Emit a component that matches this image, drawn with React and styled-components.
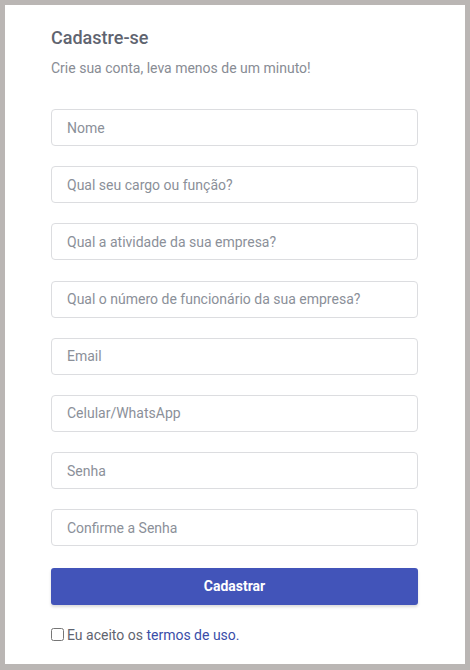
import styled, { createGlobalStyle } from "styled-components";

const GlobalStyle = createGlobalStyle`
  html, body {
    margin: 0;
    padding: 0;
    background: #bab6b4;
    font-family: Roboto, "Liberation Sans", sans-serif;
  }
  * { box-sizing: border-box; }
`;

const Card = styled.div`
  margin: 5px;
  width: 460px;
  height: 659px;
  background: #fff;
  padding: 21px 47px 0 46px;
`;

const Title = styled.h1`
  margin: 0;
  font-size: 18px;
  font-weight: 500;
  line-height: 24px;
  color: #5f6470;
`;

const Subtitle = styled.p`
  margin: 8px 0 0;
  font-size: 14px;
  line-height: 20px;
  color: #888c94;
`;

const Form = styled.form`
  display: flex;
  flex-direction: column;
  gap: 20.2px;
  margin-top: 31px;
`;

const Input = styled.input`
  width: 100%;
  height: 37px;
  border: 1px solid #dcdde0;
  border-radius: 4px;
  padding: 0 15px;
  font-family: inherit;
  font-size: 14px;
  color: #333;
  outline: none;

  &::placeholder {
    color: #8b9099;
  }
`;

const Button = styled.button`
  height: 37px;
  margin-top: 1px;
  border: none;
  border-radius: 3px;
  background: #4254b9;
  color: #fff;
  font-family: inherit;
  font-size: 14px;
  font-weight: 700;
  box-shadow: 0 2px 3px rgba(0, 0, 0, 0.15);
  cursor: pointer;
`;

const Terms = styled.label`
  display: flex;
  align-items: center;
  gap: 3px;
  margin-top: 2px;
  font-size: 14px;
  color: #5f6470;
  white-space: pre;
`;

const Check = styled.input`
  margin: 0;
  width: 13px;
  height: 13px;
`;

const Link = styled.a`
  color: #3a4da8;
  text-decoration: none;
`;

const fields = [
  ["text", "Nome"],
  ["text", "Qual seu cargo ou função?"],
  ["text", "Qual a atividade da sua empresa?"],
  ["text", "Qual o número de funcionário da sua empresa?"],
  ["email", "Email"],
  ["tel", "Celular/WhatsApp"],
  ["password", "Senha"],
  ["password", "Confirme a Senha"],
];

export default function App() {
  return (
    <>
      <GlobalStyle />
      <Card>
        <Title>Cadastre-se</Title>
        <Subtitle>Crie sua conta, leva menos de um minuto!</Subtitle>
        <Form onSubmit={(e) => e.preventDefault()}>
          {fields.map(([type, ph]) => (
            <Input key={ph} type={type} placeholder={ph} />
          ))}
          <Button type="submit">Cadastrar</Button>
          <Terms>
            <Check type="checkbox" />
            <span>
              Eu aceito os <Link href="#">termos de uso.</Link>
            </span>
          </Terms>
        </Form>
      </Card>
    </>
  );
}
